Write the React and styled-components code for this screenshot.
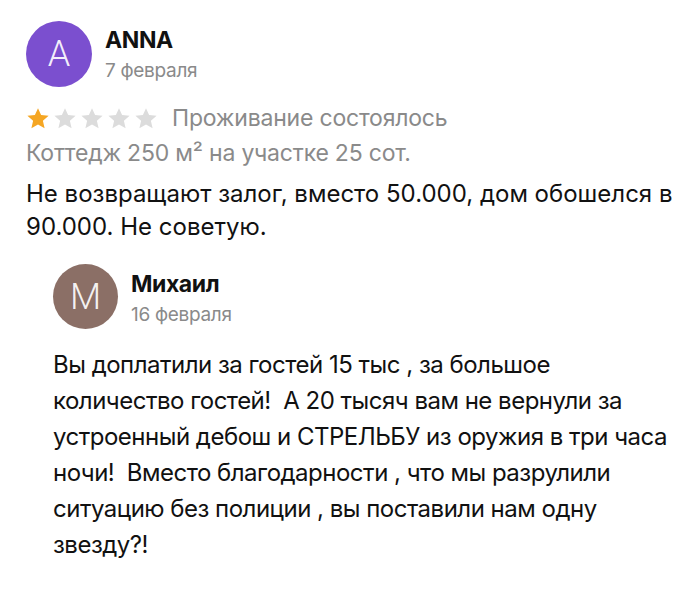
import React from "react";
import styled, { createGlobalStyle } from "styled-components";

const Global = createGlobalStyle`
  html, body { margin: 0; padding: 0; background: #ffffff; }
  body { font-family: Inter, "Noto Sans", sans-serif; color: #111; }
`;

const Page = styled.div`
  width: 700px;
  height: 592px;
  box-sizing: border-box;
  padding: 21px 10px 0 26px;
  overflow: hidden;
  background: #fff;
`;

const Review = styled.div`
  display: flex;
  flex-direction: column;
`;

const Header = styled.div`
  display: flex;
  align-items: flex-start;
  gap: 13px;
`;

const Avatar = styled.div`
  width: ${p => p.$size}px;
  height: ${p => p.$size}px;
  border-radius: 50%;
  background: ${p => p.$bg};
  color: rgba(255,255,255,0.92);
  display: flex;
  align-items: center;
  justify-content: center;
  font-family: Roboto, sans-serif;
  font-weight: 300;
  font-size: 36px;
  flex-shrink: 0;
`;

const NameBlock = styled.div`
  display: flex;
  flex-direction: column;
  padding-top: ${p => p.$pt || 6}px;
`;

const Name = styled.div`
  font-family: Inter, Roboto, sans-serif;
  font-weight: 700;
  font-size: 23px;
  line-height: 26px;
  color: #111;
  letter-spacing: -0.4px;
`;

const DateText = styled.div`
  font-family: Inter, Roboto, sans-serif;
  font-size: 19px;
  line-height: 24px;
  color: #8a8a8a;
  margin-top: 6px;
  letter-spacing: -0.3px;
`;

const RatingRow = styled.div`
  display: flex;
  align-items: center;
  margin-top: 18px;
  height: 26px;
`;

const Stars = styled.div`
  display: flex;
  gap: 3px;
  margin-right: 14px;
`;

const Meta = styled.div`
  font-family: Inter, Roboto, sans-serif;
  font-size: 23px;
  line-height: 26px;
  color: #8a8a8a;
  letter-spacing: -0.2px;
`;

const SubMeta = styled(Meta)`
  margin-top: 9px;
`;

const Body = styled.p`
  margin: 11px 0 0 0;
  font-family: Inter, Roboto, sans-serif;
  font-size: 24px;
  line-height: 33px;
  color: #111;
  letter-spacing: 0;
  white-space: pre-wrap;
`;

const Reply = styled.div`
  display: flex;
  flex-direction: column;
  margin-left: 27px;
  margin-top: 21px;
`;

const ReplyBody = styled.p`
  margin: 18px 0 0 0;
  font-family: Inter, Roboto, sans-serif;
  font-size: 24px;
  line-height: 36px;
  color: #111;
  letter-spacing: -0.5px;
  white-space: pre-wrap;
`;

const Star = ({ filled }) => (
  <svg width="24" height="23" viewBox="0 0 24 23">
    <path
      d="M12 1.2l3.1 6.9 7.5.7-5.7 5 1.7 7.4L12 17.4l-6.6 3.8 1.7-7.4-5.7-5 7.5-.7z"
      fill={filled ? "#f5a623" : "#dcdcdc"}
    />
  </svg>
);

const bodyLines = [
  "Не возвращают залог, вместо 50.000, дом обошелся в",
  "90.000. Не советую.",
];

const replyLines = [
  "Вы доплатили за гостей 15 тыс , за большое",
  "количество гостей!  А 20 тысяч вам не вернули за",
  "устроенный дебош и СТРЕЛЬБУ из оружия в три часа",
  "ночи!  Вместо благодарности , что мы разрулили",
  "ситуацию без полиции , вы поставили нам одну",
  "звезду?!",
];

const Lines = ({ lines }) =>
  lines.map((l, i) => (
    <React.Fragment key={i}>
      {l}
      {i < lines.length - 1 && <br />}
    </React.Fragment>
  ));

export default function App() {
  return (
    <>
      <Global />
      <Page>
        <Review>
          <Header>
            <Avatar $size={66} $bg="#7b4fcf">A</Avatar>
            <NameBlock>
              <Name>ANNA</Name>
              <DateText>7 февраля</DateText>
            </NameBlock>
          </Header>
          <RatingRow>
            <Stars>
              {[1, 0, 0, 0, 0].map((f, i) => (
                <Star key={i} filled={!!f} />
              ))}
            </Stars>
            <Meta>Проживание состоялось</Meta>
          </RatingRow>
          <SubMeta>Коттедж 250 м² на участке 25 сот.</SubMeta>
          <Body>
            <Lines lines={bodyLines} />
          </Body>
          <Reply>
            <Header>
              <Avatar $size={65} $bg="#8b6f66">M</Avatar>
              <NameBlock $pt={7}>
                <Name>Михаил</Name>
                <DateText>16 февраля</DateText>
              </NameBlock>
            </Header>
            <ReplyBody>
              <Lines lines={replyLines} />
            </ReplyBody>
          </Reply>
        </Review>
      </Page>
    </>
  );
}
